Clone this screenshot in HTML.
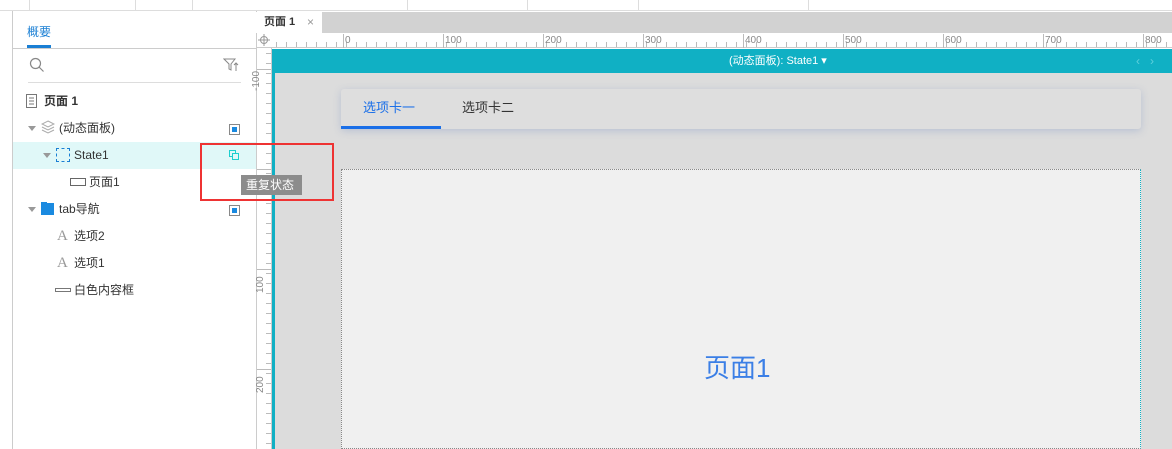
<!DOCTYPE html>
<html><head><meta charset="utf-8"><style>
*{margin:0;padding:0;box-sizing:border-box}
body{width:1172px;height:449px;overflow:hidden;background:#fff;position:relative;font-family:"Liberation Sans","Noto Sans CJK SC",sans-serif;font-size:12px;color:#333}
.a{position:absolute}
.t{position:absolute;white-space:nowrap;line-height:14px}
.chk{position:absolute;width:11px;height:11px;border:1px solid #888;background:#fff}
.chk:after{content:"";position:absolute;left:2px;top:2px;width:5px;height:5px;background:#1a8ae0}
.tri{position:absolute;width:0;height:0;border-left:4px solid transparent;border-right:4px solid transparent;border-top:5px solid #999}
.rl{position:absolute;font-size:10px;color:#888;line-height:10px}
</style></head><body>
<!-- top bar -->
<div class="a" style="left:0;top:0;width:1172px;height:11px;border-bottom:1px solid #ddd"></div>
<div class="a" style="left:29px;top:0;width:1px;height:11px;background:#ddd"></div>
<div class="a" style="left:135px;top:0;width:1px;height:11px;background:#ddd"></div>
<div class="a" style="left:192px;top:0;width:1px;height:11px;background:#ddd"></div>
<div class="a" style="left:407px;top:0;width:1px;height:11px;background:#ddd"></div>
<div class="a" style="left:527px;top:0;width:1px;height:11px;background:#ddd"></div>
<div class="a" style="left:638px;top:0;width:1px;height:11px;background:#ddd"></div>
<div class="a" style="left:808px;top:0;width:1px;height:11px;background:#ddd"></div>
<!-- left panel -->
<div class="a" style="left:12px;top:11px;width:1px;height:438px;background:#ccc"></div>
<div class="a" style="left:256px;top:11px;width:1px;height:438px;background:#ccc"></div>
<div class="t" style="left:27px;top:25px;color:#1a7fd4;font-size:12px">概要</div>
<div class="a" style="left:27px;top:45px;width:24px;height:3px;background:#1a7fd4"></div>
<div class="a" style="left:12px;top:48px;width:244px;height:1px;background:#ccc"></div>
<svg class="a" style="left:29px;top:57px" width="16" height="16"><circle cx="6.5" cy="6.5" r="5" fill="none" stroke="#888" stroke-width="1.2"/><line x1="10" y1="10" x2="14.5" y2="14.5" stroke="#888" stroke-width="1.2"/></svg>
<svg class="a" style="left:223px;top:58px" width="16" height="14"><path d="M1 1H12L8 6V12L6 11V6Z" fill="none" stroke="#888"/><path d="M13 13V5M11 7L13 5L15 7" fill="none" stroke="#888"/></svg>
<div class="a" style="left:28px;top:82px;width:213px;height:1px;background:#ddd"></div>
<!-- rows -->
<svg class="a" style="left:26px;top:94px" width="11" height="14"><rect x="0.5" y="0.5" width="10" height="13" fill="none" stroke="#777"/><path d="M3 4H8M3 7H8M3 10H8" stroke="#777"/></svg>
<div class="t" style="left:44px;top:94px;font-weight:bold">页面 1</div>
<div class="tri" style="left:28px;top:126px"></div>
<svg class="a" style="left:41px;top:120px" width="14" height="14"><path d="M7 1L13 4L7 7L1 4Z M1 7L7 10L13 7 M1 10L7 13L13 10" fill="none" stroke="#aaa"/></svg>
<div class="t" style="left:59px;top:121px">(动态面板)</div>
<div class="chk" style="left:229px;top:124px"></div>
<div class="a" style="left:13px;top:142px;width:243px;height:27px;background:#e0f8f8"></div>
<div class="tri" style="left:43px;top:153px"></div>
<div class="a" style="left:56px;top:148px;width:14px;height:14px;border:1px dashed #1a7fd4"></div>
<div class="t" style="left:74px;top:148px">State1</div>
<svg class="a" style="left:229px;top:150px" width="11" height="11"><rect x="0.5" y="0.5" width="6" height="6" fill="none" stroke="#1ccfcf"/><rect x="3.5" y="3.5" width="6" height="6" fill="#e0f8f8" stroke="#1ccfcf"/></svg>
<div class="a" style="left:70px;top:178px;width:16px;height:8px;border:1px solid #666"></div>
<div class="t" style="left:89px;top:175px">页面1</div>
<div class="tri" style="left:28px;top:207px"></div>
<div class="a" style="left:41px;top:203px;width:13px;height:12px;background:#1a8ae0"></div>
<div class="a" style="left:41px;top:202px;width:6px;height:3px;background:#1a8ae0"></div>
<div class="t" style="left:59px;top:202px">tab导航</div>
<div class="chk" style="left:229px;top:205px"></div>
<div class="t" style="left:57px;top:229px;font-family:'Liberation Serif',serif;font-size:15px;color:#999">A</div>
<div class="t" style="left:74px;top:229px">选项2</div>
<div class="t" style="left:57px;top:256px;font-family:'Liberation Serif',serif;font-size:15px;color:#999">A</div>
<div class="t" style="left:74px;top:256px">选项1</div>
<div class="a" style="left:55px;top:288px;width:16px;height:4px;border:1px solid #777"></div>
<div class="t" style="left:74px;top:283px">白色内容框</div>
<!-- tabs strip -->
<div class="a" style="left:257px;top:12px;width:915px;height:21px;background:#d2d2d2"></div>
<div class="a" style="left:254px;top:12px;width:68px;height:21px;background:#fff"></div>
<div class="t" style="left:264px;top:15px;font-size:11px;font-weight:bold;color:#333">页面 1</div>
<div class="t" style="left:307px;top:15px;font-size:12px;color:#999">×</div>
<!-- rulers -->
<div class="a" style="left:257px;top:33px;width:915px;height:15px;background:#fff;border-bottom:1px solid #ccc"></div>
<div class="a" style="left:272px;top:42px;width:900px;height:5px;background:repeating-linear-gradient(90deg,transparent 0,transparent 1px,#bbb 1px,#bbb 2px,transparent 2px,transparent 10px);background-position:3px 0"></div>
<div class="a" style="left:272px;top:34px;width:900px;height:14px;background:repeating-linear-gradient(90deg,#bbb 0,#bbb 1px,transparent 1px,transparent 100px);background-position:71px 0"></div>
<div class="rl" style="left:345px;top:36px">0</div><div class="rl" style="left:445px;top:36px">100</div><div class="rl" style="left:545px;top:36px">200</div><div class="rl" style="left:645px;top:36px">300</div><div class="rl" style="left:745px;top:36px">400</div><div class="rl" style="left:845px;top:36px">500</div><div class="rl" style="left:945px;top:36px">600</div><div class="rl" style="left:1045px;top:36px">700</div><div class="rl" style="left:1145px;top:36px">800</div>
<svg class="a" style="left:258px;top:34px" width="12" height="12"><circle cx="6" cy="6" r="3.5" fill="none" stroke="#999"/><path d="M6 0V12M0 6H12" stroke="#999"/></svg>
<div class="a" style="left:257px;top:48px;width:15px;height:401px;background:#fff;border-right:1px solid #ccc"></div>
<div class="a" style="left:266px;top:48px;width:5px;height:401px;background:repeating-linear-gradient(180deg,transparent 0,transparent 5px,#bbb 5px,#bbb 6px,transparent 6px,transparent 10px)"></div>
<div class="a" style="left:257px;top:48px;width:14px;height:401px;background:repeating-linear-gradient(180deg,transparent 0,transparent 21px,#bbb 21px,#bbb 22px,transparent 22px,transparent 100px)"></div>
<div class="rl" style="left:257px;top:72px;transform:rotate(-90deg);transform-origin:center;width:14px;height:24px;text-align:center">-100</div>
<div class="rl" style="left:259px;top:276px;transform:rotate(-90deg);width:14px;height:20px">100</div>
<div class="rl" style="left:259px;top:376px;transform:rotate(-90deg);width:14px;height:20px">200</div>
<!-- canvas -->
<div class="a" style="left:272px;top:49px;width:900px;height:400px;background:#dcdcdc"></div>
<div class="a" style="left:272px;top:49px;width:3px;height:400px;background:#10b0c4"></div>
<div class="a" style="left:272px;top:49px;width:900px;height:24px;background:#10b0c4"></div>
<div class="t" style="left:729px;top:54px;color:#fff;font-size:11px">(动态面板): State1 ▾</div>
<div class="t" style="left:1136px;top:54px;color:#5fd0dc;font-size:12px">‹ &nbsp;&nbsp;›</div>
<div class="a" style="left:341px;top:89px;width:800px;height:40px;background:#dedede;border-radius:3px;box-shadow:0 2px 8px rgba(140,160,200,.45)"></div>
<div class="t" style="left:363px;top:101px;color:#1a6fe8;font-size:13px">选项卡一</div>
<div class="t" style="left:462px;top:101px;color:#333;font-size:13px">选项卡二</div>
<div class="a" style="left:341px;top:126px;width:100px;height:3px;background:#1a6fe8"></div>
<div class="a" style="left:341px;top:169px;width:800px;height:280px;background:#f0f0f0;border:1px dotted #888;border-right:1px dotted #10b0c4"></div>
<div class="t" style="left:704px;top:354px;color:#3b7fe6;font-size:26px;line-height:28px">页面1</div>
<!-- red box + tooltip -->
<div class="a" style="left:200px;top:143px;width:134px;height:58px;border:2px solid #ee3333"></div>
<div class="a" style="left:241px;top:175px;width:61px;height:20px;background:#8c8c8c"></div>
<div class="t" style="left:246px;top:178px;color:#fff;font-size:12px">重复状态</div>
</body></html>
